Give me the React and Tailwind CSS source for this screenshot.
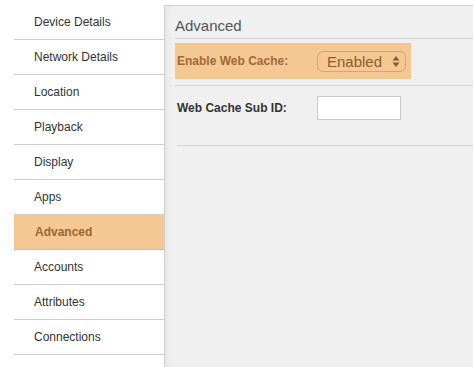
import React from 'react';

const items = ['Device Details', 'Network Details', 'Location', 'Playback', 'Display', 'Apps', 'Advanced', 'Accounts', 'Attributes', 'Connections'];

export default function App() {
  const active = 'Advanced';

  return (
    <div className="w-[473px] h-[367px] flex bg-white overflow-hidden" style={{ fontFamily: 'Helvetica, "Liberation Sans", Arial, sans-serif' }}>
      {/* Sidebar menu */}
      <div className="w-[164px] shrink-0 pl-[14px] pt-[5px]">
        {items.map((item) =>
          item === active ? (
            <div key={item} className="h-[35px] flex items-center pl-[21px] bg-[#f5c893] border-b border-[#e9b987] text-[12px] font-bold text-[#9c6532]">
              {item}
            </div>
          ) : (
            <div key={item} className="h-[35px] flex items-center pl-[20px] border-b border-[#cfcfcf] text-[12px] text-[#333]">
              {item}
            </div>
          )
        )}
      </div>

      {/* Settings panel */}
      <div className="flex-1 mt-[5px] bg-[#f0f0f0] border-l border-t border-[#cfcfcf] pl-[10px] shadow-[inset_6px_0_8px_-6px_rgba(0,0,0,0.08)]">
        <div className="pt-[11px] pb-[3px] leading-[18px] text-[15px] text-[#555] border-b border-[#d6d6d6]">Advanced</div>

        <div className="mt-[4px] w-[236px] h-[36px] bg-[#f5c893] flex items-center pl-[2px]">
          <div className="w-[140px] text-[12px] font-bold text-[#a06a3a]">Enable Web Cache:</div>
          <div className="w-[89px] h-[21px] rounded-[6px] border border-[#d9a46f] flex items-center justify-between pl-[9px] pr-[5px] text-[15px] text-[#8f5b2e]">
            <span className="leading-none">Enabled</span>
            <svg width="8" height="13" viewBox="0 0 8 13">
              <path d="M4 1 L7.5 5.5 H0.5 Z" fill="#8a5a30" />
              <path d="M4 12 L7.5 7.5 H0.5 Z" fill="#8a5a30" />
            </svg>
          </div>
        </div>

        <div className="mt-[6px] border-t border-[#d6d6d6] pt-[10px] h-[60px] flex items-start pl-[2px]">
          <div className="w-[140px] h-[24px] flex items-center text-[12px] font-bold text-[#333]">Web Cache Sub ID:</div>
          <input type="text" className="w-[84px] h-[24px] bg-white border border-[#c8c8c8] outline-none" />
        </div>

        <div className="border-t border-[#d6d6d6] ml-[2px]"></div>
      </div>
    </div>
  );
}
